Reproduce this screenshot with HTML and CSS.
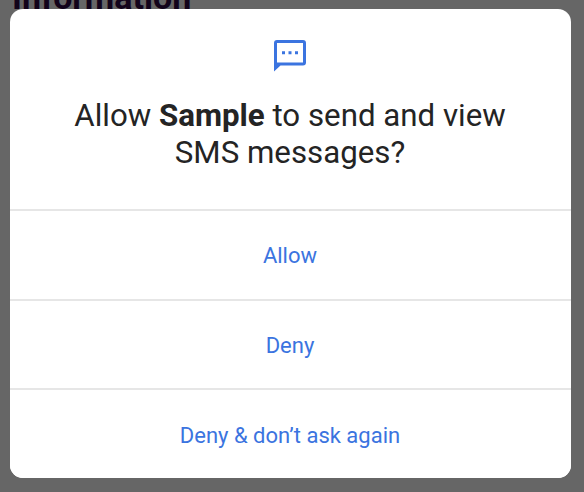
FILE: index.html
```html
<!DOCTYPE html>
<html lang="en">
<head>
<meta charset="utf-8">
<title>Permission request</title>
<link rel="stylesheet" href="styles.css">
</head>
<body>
<h2 class="page-title">Information</h2>
<main class="dialog">
  <header class="prompt">
    <svg class="icon" viewBox="0 0 32 32" aria-hidden="true">
      <path fill="#3b74e0" fill-rule="evenodd" d="M3 0H29Q32 0 32 3V22.5Q32 25.5 29 25.5H6.5L0 31.5V3Q0 0 3 0ZM3 3V22.5H29V3Z"/>
      <path fill="#3b74e0" d="M8 11.2h3v3H8zM14.5 11.2h3v3h-3zM21 11.2h3v3h-3z"/>
    </svg>
    <h1 class="question">Allow <b>Sample</b> to send and view<br>SMS messages?</h1>
  </header>
  <button class="action">Allow</button>
  <button class="action">Deny</button>
  <button class="action">Deny &amp; don’t ask again</button>
</main>
</body>
</html>
```
FILE: styles.css
```css
* { box-sizing: border-box; }
body { margin: 0; height: 492px; overflow: hidden; background: #666; font-family: Roboto, sans-serif; position: relative; }
.page-title { position: absolute; left: 12px; top: -23px; margin: 0; font-size: 34px; line-height: 40px; color: #12031a; }
.dialog { position: relative; display: flex; flex-direction: column; width: 561px; height: 469px; margin: 9px 0 0 9.5px; border-radius: 13px; background: #fff; overflow: hidden; }
.prompt { height: 200px; padding-top: 30.5px; display: flex; flex-direction: column; align-items: center; }
.icon { width: 32px; height: 32px; }
.question { margin: 25.5px 0 0; font-size: 31.25px; line-height: 37px; font-weight: 400; text-align: center; color: #242424; white-space: nowrap; }
.question b { font-weight: 700; }
.action { height: 89.7px; padding: 3px 0 0; border: 0; border-top: 2px solid #e6e6e6; background: #fff; color: #3b74e0; font: 400 22px/26px Roboto, sans-serif; }
```
